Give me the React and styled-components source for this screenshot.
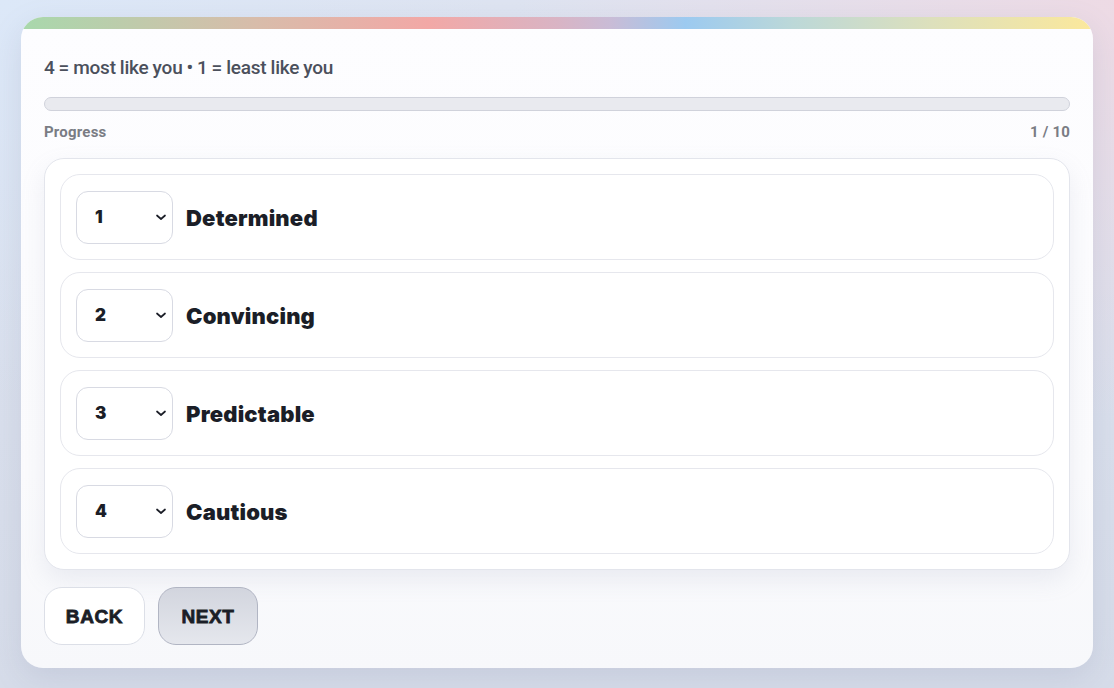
import React, { useState } from 'react';
import styled, { createGlobalStyle } from 'styled-components';

const GlobalStyle = createGlobalStyle`
  html, body {
    margin: 0;
    padding: 0;
    min-height: 100%;
  }
  body {
    font-family: 'Roboto', 'Liberation Sans', sans-serif;
    background:
      radial-gradient(ellipse 600px 420px at 100% 0%, rgba(238, 218, 228, 0.95) 0%, rgba(238, 218, 228, 0) 100%),
      radial-gradient(ellipse 500px 400px at 0% 0%, rgba(220, 232, 248, 1) 0%, rgba(220, 232, 248, 0) 100%),
      linear-gradient(180deg, #dee4f1 0%, #d6dce9 100%);
    min-height: 688px;
  }
`;

const Page = styled.div`
  padding: 17px 21px 20px;
  box-sizing: border-box;
  min-height: 688px;
`;

const Card = styled.div`
  background: linear-gradient(180deg, #fdfdff 0%, #fbfbfd 70%, #f7f8fb 100%);
  border-radius: 22px;
  overflow: hidden;
  box-shadow: 0 10px 30px rgba(120, 130, 160, 0.18);
`;

const Strip = styled.div`
  height: 12px;
  background: linear-gradient(90deg, #a8d8ac 0%, #d8bcaa 22%, #f2a8a6 38%, #d9b4c4 50%, #c9bcd6 55%, #9ccaf0 62%, #bcd8d8 72%, #dde0bc 85%, #fbe89c 100%);
`;

const Body = styled.div`
  padding: 27px 23px 23px;
`;

const Legend = styled.div`
  font-size: 19px;
  line-height: 24px;
  font-weight: 500;
  color: #4b505c;
  letter-spacing: -0.2px;
  word-spacing: -0.5px;
`;

const ProgressTrack = styled.div`
  margin-top: 17px;
  height: 14px;
  box-sizing: border-box;
  border-radius: 999px;
  background: #e9eaef;
  border: 1px solid #d0d2db;
  overflow: hidden;
`;

const ProgressFill = styled.div`
  height: 100%;
  background: #c8ccd8;
`;

const ProgressMeta = styled.div`
  display: flex;
  justify-content: space-between;
  margin-top: 13px;
  font-size: 15px;
  line-height: 16px;
  font-weight: 700;
  color: #7a7c84;
  letter-spacing: 0.2px;
`;

const Panel = styled.div`
  margin-top: 18px;
  background: #ffffff;
  border: 1px solid #e3e5ec;
  border-radius: 20px;
  padding: 15px;
  display: flex;
  flex-direction: column;
  gap: 12px;
  box-shadow: 0 10px 24px rgba(140, 150, 180, 0.14);
`;

const Row = styled.div`
  display: flex;
  align-items: center;
  gap: 13px;
  height: 86px;
  box-sizing: border-box;
  padding: 0 15px;
  border: 1px solid #e6e7ed;
  border-radius: 20px;
  background: #ffffff;
`;

const SelectWrap = styled.div`
  position: relative;
  width: 97px;
  height: 53px;
  flex-shrink: 0;
`;

const Select = styled.select`
  appearance: none;
  -webkit-appearance: none;
  width: 100%;
  height: 100%;
  box-sizing: border-box;
  border: 1px solid #d8dae3;
  border-radius: 12px;
  background: #ffffff;
  padding: 0 0 0 18px;
  font-family: 'Inter', 'Liberation Sans', sans-serif;
  font-size: 17px;
  font-weight: 900;
  color: #1b1e27;
  outline: none;
`;

const Chevron = styled.svg`
  position: absolute;
  right: 5px;
  top: 50%;
  transform: translateY(-50%);
  pointer-events: none;
`;

const Label = styled.div`
  font-family: 'Inter', 'Liberation Sans', sans-serif;
  font-size: 22px;
  line-height: 28px;
  padding-top: 2px;
  font-weight: 900;
  color: #1b1e27;
  letter-spacing: 0.2px;
`;

const Actions = styled.div`
  display: flex;
  gap: 13px;
  margin-top: 17px;
`;

const Button = styled.button`
  height: 58px;
  width: ${p => p.$w}px;
  box-sizing: border-box;
  border-radius: 18px;
  border: 1px solid ${p => (p.$primary ? '#b1b5c3' : '#dcdfe7')};
  background: ${p => (p.$primary ? 'linear-gradient(180deg, #d2d5de 0%, #e5e7ed 100%)' : '#ffffff')};
  font-family: 'Liberation Sans', 'Inter', sans-serif;
  font-weight: 900;
  font-size: 19px;
  letter-spacing: 0.6px;
  color: #1b1e27;
  cursor: pointer;
  padding-top: 2px;
  -webkit-text-stroke: 0.8px #1b1e27;
`;

const items = [
  { rank: '1', word: 'Determined' },
  { rank: '2', word: 'Convincing' },
  { rank: '3', word: 'Predictable' },
  { rank: '4', word: 'Cautious' },
];

export default function App() {
  const [ranks, setRanks] = useState(items.map(i => i.rank));

  return (
    <>
      <GlobalStyle />
      <Page>
        <Card>
          <Strip />
          <Body>
            <Legend>4 = most like you • 1 = least like you</Legend>
            <ProgressTrack>
              <ProgressFill style={{ width: '0%' }} />
            </ProgressTrack>
            <ProgressMeta>
              <span>Progress</span>
              <span>1 / 10</span>
            </ProgressMeta>
            <Panel>
              {items.map((item, i) => (
                <Row key={item.word}>
                  <SelectWrap>
                    <Select
                      value={ranks[i]}
                      onChange={e => {
                        const next = [...ranks];
                        next[i] = e.target.value;
                        setRanks(next);
                      }}
                    >
                      {['1', '2', '3', '4'].map(v => (
                        <option key={v} value={v}>{v}</option>
                      ))}
                    </Select>
                    <Chevron width="14" height="14" viewBox="0 0 14 14">
                      <path d="M3 5.5 L7 9 L11 5.5" fill="none" stroke="#1b1e27" strokeWidth="1.7" strokeLinecap="round" strokeLinejoin="round" />
                    </Chevron>
                  </SelectWrap>
                  <Label>{item.word}</Label>
                </Row>
              ))}
            </Panel>
            <Actions>
              <Button $w={101}>BACK</Button>
              <Button $w={100} $primary>NEXT</Button>
            </Actions>
          </Body>
        </Card>
      </Page>
    </>
  );
}
